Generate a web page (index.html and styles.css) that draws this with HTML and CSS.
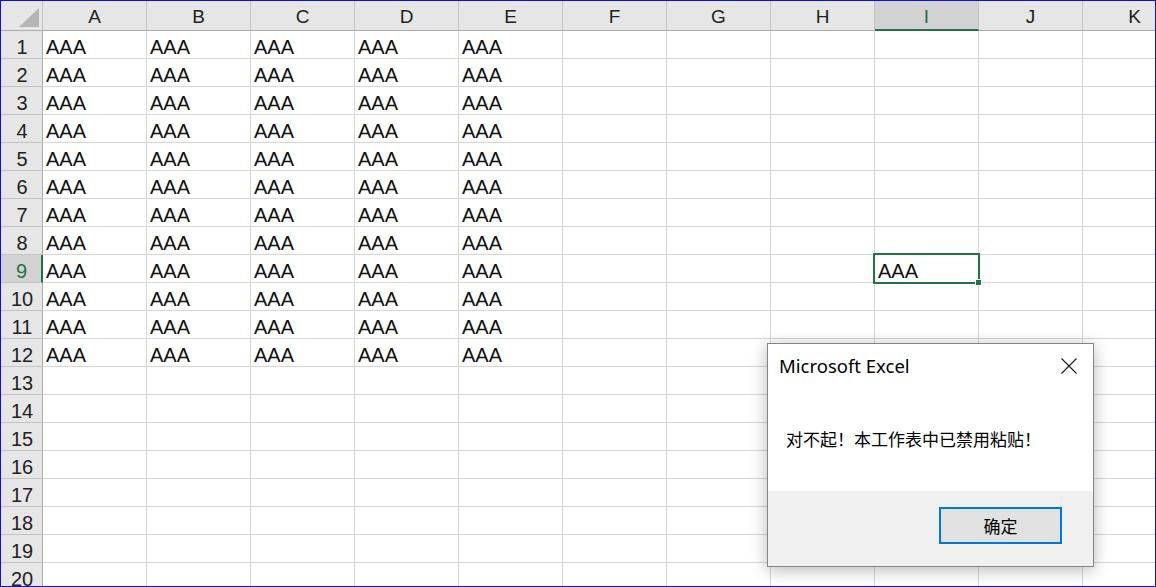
FILE: index.html
```html
<!DOCTYPE html>
<html lang="zh-CN">
<head>
<meta charset="utf-8">
<title>Excel</title>
<link rel="stylesheet" href="styles.css">
</head>
<body>
<div class="frame">
  <div class="sheet">
    <div class="corner"><svg width="20" height="19" viewBox="0 0 20 19"><polygon points="20,0 20,19 0,19" fill="#b5b5b5"/></svg></div>
    <div class="ch">A</div><div class="ch">B</div><div class="ch">C</div><div class="ch">D</div><div class="ch">E</div><div class="ch">F</div><div class="ch">G</div><div class="ch">H</div><div class="ch ch-sel">I</div><div class="ch">J</div><div class="ch">K</div>

    <div class="rh">1</div><div class="c">AAA</div><div class="c">AAA</div><div class="c">AAA</div><div class="c">AAA</div><div class="c">AAA</div><div class="c"></div><div class="c"></div><div class="c"></div><div class="c"></div><div class="c"></div><div class="c"></div>
    <div class="rh">2</div><div class="c">AAA</div><div class="c">AAA</div><div class="c">AAA</div><div class="c">AAA</div><div class="c">AAA</div><div class="c"></div><div class="c"></div><div class="c"></div><div class="c"></div><div class="c"></div><div class="c"></div>
    <div class="rh">3</div><div class="c">AAA</div><div class="c">AAA</div><div class="c">AAA</div><div class="c">AAA</div><div class="c">AAA</div><div class="c"></div><div class="c"></div><div class="c"></div><div class="c"></div><div class="c"></div><div class="c"></div>
    <div class="rh">4</div><div class="c">AAA</div><div class="c">AAA</div><div class="c">AAA</div><div class="c">AAA</div><div class="c">AAA</div><div class="c"></div><div class="c"></div><div class="c"></div><div class="c"></div><div class="c"></div><div class="c"></div>
    <div class="rh">5</div><div class="c">AAA</div><div class="c">AAA</div><div class="c">AAA</div><div class="c">AAA</div><div class="c">AAA</div><div class="c"></div><div class="c"></div><div class="c"></div><div class="c"></div><div class="c"></div><div class="c"></div>
    <div class="rh">6</div><div class="c">AAA</div><div class="c">AAA</div><div class="c">AAA</div><div class="c">AAA</div><div class="c">AAA</div><div class="c"></div><div class="c"></div><div class="c"></div><div class="c"></div><div class="c"></div><div class="c"></div>
    <div class="rh">7</div><div class="c">AAA</div><div class="c">AAA</div><div class="c">AAA</div><div class="c">AAA</div><div class="c">AAA</div><div class="c"></div><div class="c"></div><div class="c"></div><div class="c"></div><div class="c"></div><div class="c"></div>
    <div class="rh">8</div><div class="c">AAA</div><div class="c">AAA</div><div class="c">AAA</div><div class="c">AAA</div><div class="c">AAA</div><div class="c"></div><div class="c"></div><div class="c"></div><div class="c"></div><div class="c"></div><div class="c"></div>
    <div class="rh rh-sel">9</div><div class="c">AAA</div><div class="c">AAA</div><div class="c">AAA</div><div class="c">AAA</div><div class="c">AAA</div><div class="c"></div><div class="c"></div><div class="c"></div><div class="c c-sel">AAA<span class="handle"></span></div><div class="c"></div><div class="c"></div>
    <div class="rh">10</div><div class="c">AAA</div><div class="c">AAA</div><div class="c">AAA</div><div class="c">AAA</div><div class="c">AAA</div><div class="c"></div><div class="c"></div><div class="c"></div><div class="c"></div><div class="c"></div><div class="c"></div>
    <div class="rh">11</div><div class="c">AAA</div><div class="c">AAA</div><div class="c">AAA</div><div class="c">AAA</div><div class="c">AAA</div><div class="c"></div><div class="c"></div><div class="c"></div><div class="c"></div><div class="c"></div><div class="c"></div>
    <div class="rh">12</div><div class="c">AAA</div><div class="c">AAA</div><div class="c">AAA</div><div class="c">AAA</div><div class="c">AAA</div><div class="c"></div><div class="c"></div><div class="c"></div><div class="c"></div><div class="c"></div><div class="c"></div>
    <div class="rh">13</div><div class="c"></div><div class="c"></div><div class="c"></div><div class="c"></div><div class="c"></div><div class="c"></div><div class="c"></div><div class="c"></div><div class="c"></div><div class="c"></div><div class="c"></div>
    <div class="rh">14</div><div class="c"></div><div class="c"></div><div class="c"></div><div class="c"></div><div class="c"></div><div class="c"></div><div class="c"></div><div class="c"></div><div class="c"></div><div class="c"></div><div class="c"></div>
    <div class="rh">15</div><div class="c"></div><div class="c"></div><div class="c"></div><div class="c"></div><div class="c"></div><div class="c"></div><div class="c"></div><div class="c"></div><div class="c"></div><div class="c"></div><div class="c"></div>
    <div class="rh">16</div><div class="c"></div><div class="c"></div><div class="c"></div><div class="c"></div><div class="c"></div><div class="c"></div><div class="c"></div><div class="c"></div><div class="c"></div><div class="c"></div><div class="c"></div>
    <div class="rh">17</div><div class="c"></div><div class="c"></div><div class="c"></div><div class="c"></div><div class="c"></div><div class="c"></div><div class="c"></div><div class="c"></div><div class="c"></div><div class="c"></div><div class="c"></div>
    <div class="rh">18</div><div class="c"></div><div class="c"></div><div class="c"></div><div class="c"></div><div class="c"></div><div class="c"></div><div class="c"></div><div class="c"></div><div class="c"></div><div class="c"></div><div class="c"></div>
    <div class="rh">19</div><div class="c"></div><div class="c"></div><div class="c"></div><div class="c"></div><div class="c"></div><div class="c"></div><div class="c"></div><div class="c"></div><div class="c"></div><div class="c"></div><div class="c"></div>
    <div class="rh">20</div><div class="c"></div><div class="c"></div><div class="c"></div><div class="c"></div><div class="c"></div><div class="c"></div><div class="c"></div><div class="c"></div><div class="c"></div><div class="c"></div><div class="c"></div>
  </div>

  <div class="dialog">
    <div class="dlg-title">
      <span class="dlg-title-text">Microsoft Excel</span>
      <svg class="dlg-close" width="16" height="16" viewBox="0 0 16 16"><path d="M0.5 0.5 L15.5 15.5 M15.5 0.5 L0.5 15.5" stroke="#1a1a1a" stroke-width="1.1" fill="none"/></svg>
    </div>
    <div class="dlg-msg">对不起！本工作表中已禁用粘贴！</div>
    <div class="dlg-foot">
      <div class="dlg-btn">确定</div>
    </div>
  </div>
</div>
</body>
</html>
```

FILE: styles.css
```css
html, body {
  margin: 0;
  padding: 0;
  background: #ffffff;
}

.frame {
  position: relative;
  width: 1156px;
  height: 587px;
  box-sizing: border-box;
  border: 1px solid #1010d8;
  overflow: hidden;
  background: #ffffff;
}

.sheet {
  display: grid;
  grid-template-columns: 42px repeat(11, 104px);
  grid-template-rows: 30px;
  grid-auto-rows: 28px;
  font-family: "Liberation Sans", Arial, sans-serif;
  color: #000;
}

.sheet > div {
  box-sizing: border-box;
  border-right: 1px solid #d6d6d6;
  border-bottom: 1px solid #d6d6d6;
}

.corner {
  background: #e6e6e6;
  display: flex;
  align-items: flex-end;
  justify-content: flex-end;
  padding: 0 3px 3px 0;
}
.sheet > .corner {
  border-right: 1px solid #c4c4c4;
  border-bottom: 1px solid #ababab;
}
.corner svg { display: block; }

.sheet > .ch {
  background: #e6e6e6;
  border-right: 1px solid #c4c4c4;
  border-bottom: 1px solid #ababab;
  font-size: 19px;
  line-height: 19px;
  color: #222;
  display: flex;
  align-items: flex-end;
  justify-content: center;
  padding-bottom: 4px;
}
.sheet > .ch-sel {
  background: #d2d2d2;
  color: #217346;
  border-bottom: 2px solid #217346;
  padding-bottom: 3px;
}

.sheet > .rh {
  background: #e6e6e6;
  border-right: 1px solid #ababab;
  border-bottom: 1px solid #c4c4c4;
  font-size: 20px;
  line-height: 20px;
  color: #222;
  display: flex;
  align-items: flex-end;
  justify-content: center;
  padding-bottom: 1px;
  padding-left: 1px;
}
.sheet > .rh-sel {
  background: #d2d2d2;
  color: #217346;
  border-right: 2px solid #217346;
}

.c {
  font-size: 20px;
  line-height: 20px;
  display: flex;
  align-items: flex-end;
  padding: 0 0 1px 3px;
  white-space: nowrap;
  color: #111;
}

.c-sel {
  position: relative;
}
.c-sel::after {
  content: "";
  position: absolute;
  left: -2px;
  top: -2px;
  right: -2px;
  bottom: -2px;
  border: 2px solid #217346;
  pointer-events: none;
}
.handle {
  position: absolute;
  right: -4px;
  bottom: -4px;
  width: 5px;
  height: 5px;
  background: #217346;
  border: 1px solid #ffffff;
  z-index: 2;
}

.dialog {
  position: absolute;
  left: 766px;
  top: 342px;
  width: 327px;
  height: 224px;
  box-sizing: border-box;
  border: 1px solid #858585;
  background: #ffffff;
  box-shadow: 0 3px 16px rgba(0, 0, 0, 0.28);
  display: flex;
  flex-direction: column;
}

.dlg-title {
  height: 43px;
  display: flex;
  align-items: center;
  justify-content: space-between;
  padding: 0 16px 0 11px;
  flex: none;
}
.dlg-title-text {
  font-family: "Noto Sans", "Open Sans", sans-serif;
  font-size: 18.5px;
  color: #000;
}
.dlg-close { display: block; }

.dlg-msg {
  flex: 1;
  padding: 40px 0 0 18px;
  font-family: "Noto Sans CJK SC", "Noto Sans", sans-serif;
  font-size: 17px;
  line-height: 24px;
  color: #000;
}

.dlg-foot {
  height: 75px;
  flex: none;
  background: #f0f0f0;
  display: flex;
  justify-content: flex-end;
  align-items: flex-start;
  padding: 16px 31px 0 0;
  box-sizing: border-box;
}

.dlg-btn {
  width: 123px;
  height: 37px;
  box-sizing: border-box;
  border: 2px solid #0078d7;
  background: #e1e1e1;
  font-family: "Noto Sans CJK SC", sans-serif;
  font-size: 17px;
  display: flex;
  align-items: center;
  justify-content: center;
  color: #000;
}
```
